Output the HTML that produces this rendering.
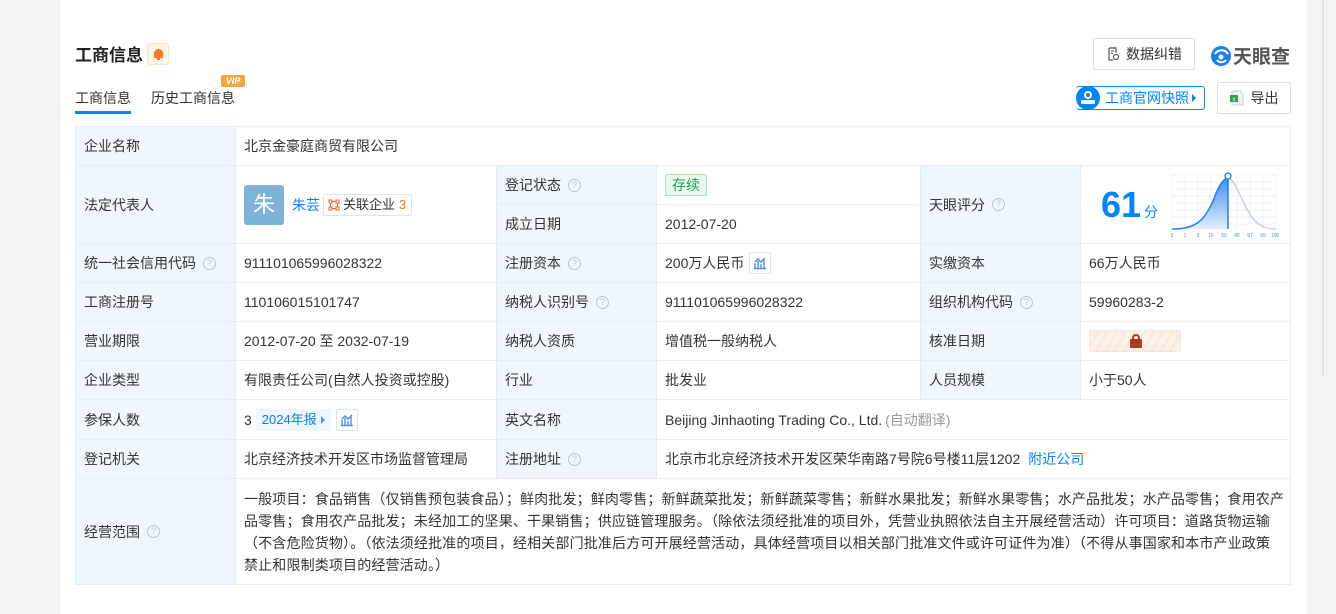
<!DOCTYPE html>
<html><head><meta charset="utf-8"><style>
*{box-sizing:border-box;margin:0;padding:0}
body{width:1336px;height:614px;background:#f4f4f4;font-family:"Liberation Sans","Noto Sans CJK SC",sans-serif;color:#333;font-size:14px;position:relative;overflow:hidden}
.card{position:absolute;left:59px;top:0;width:1248px;height:614px;background:#fff;border-left:1px solid #eaeaea}
.a{position:absolute}
.c{position:absolute;border-right:1px solid #e4ecf6;border-bottom:1px solid #e4ecf6;display:flex;align-items:center;padding-left:8px;white-space:nowrap}
.l{background:#f0f6fd}
.q{display:inline-block;width:13px;height:13px;border:1px solid #b7c6d8;border-radius:50%;font-size:9px;color:#b7c6d8;text-align:center;line-height:11px;margin-left:7px}
.btn{position:absolute;border:1px solid #dcdfe6;border-radius:2px;background:#fff;display:flex;align-items:center;justify-content:center;font-size:14px;color:#333}
.ic{display:inline-block;width:22px;height:22px;border:1px solid #dfe3ea;border-radius:2px;margin-left:5px;position:relative}
</style></head><body>
<div class="card"></div>
<div class="a" style="left:1322px;top:0;width:2px;height:376px;background:#e4e4e6"></div>

<div class="a" style="left:75px;top:41px;font-size:17px;font-weight:bold;color:#222">工商信息</div>
<div class="a" style="left:147px;top:43px;width:22px;height:22px;background:#fff3e8;border:1px solid #fde2c8;border-radius:3px"><div style="position:absolute;left:6px;top:5px;width:9px;height:9px;background:#fa7a1a;border-radius:5px 5px 1px 1px"></div><div style="position:absolute;left:9px;top:14px;width:3px;height:2px;background:#fa7a1a"></div></div>

<div class="a" style="left:75px;top:88px;font-size:14px;color:#333">工商信息</div>
<div class="a" style="left:75px;top:111px;width:56px;height:3px;background:#0084ff"></div>
<div class="a" style="left:151px;top:88px;font-size:14px;color:#333">历史工商信息</div>
<div class="a" style="left:221px;top:75px;width:24px;height:12px;background:#f5a73b;border-radius:2px;color:#fff;font-size:9px;font-weight:bold;font-style:italic;text-align:center;line-height:12px">VIP</div>

<div class="btn" style="left:1093px;top:38px;width:102px;height:32px"><svg width="14" height="14" viewBox="0 0 14 14" style="margin-right:6px"><path d="M3 1h7v5M3 1v12h4" fill="none" stroke="#555" stroke-width="1.2"/><path d="M5 4h3M5 6.5h2" stroke="#555"/><circle cx="10" cy="10" r="2.5" fill="none" stroke="#555" stroke-width="1.2"/></svg>数据纠错</div>
<div class="a" style="left:1210px;top:42px;display:flex;align-items:center"><svg width="22" height="22" viewBox="0 0 22 22"><circle cx="11" cy="11" r="10" fill="#1a7ff5"/><path d="M5 9c3-5 10-5 13 0M7 15c2 3 7 3 9 0" stroke="#fff" stroke-width="2" fill="none"/><circle cx="11" cy="12" r="2.5" fill="#fff"/></svg><span style="font-size:19px;font-weight:bold;color:#555;margin-left:1px">天眼查</span></div>

<div class="a" style="left:1076px;top:86px;width:129px;height:24px;border:1px solid #0084ff;border-radius:3px;border-left:none"></div>
<div class="a" style="left:1076px;top:86px;width:24px;height:24px;background:#0084ff;border-radius:50%"><div style="position:absolute;left:8px;top:5px;width:8px;height:8px;border:2px solid #fff;border-radius:50%"></div><div style="position:absolute;left:5px;top:14px;width:14px;height:4px;border:2px solid #fff;border-radius:1px"></div></div>
<div class="a" style="left:1105px;top:88px;color:#0084ff;font-size:14px">工商官网快照</div>
<div class="a" style="left:1192px;top:94px;border-left:4px solid #0084ff;border-top:4px solid transparent;border-bottom:4px solid transparent"></div>

<div class="btn" style="left:1217px;top:82px;width:74px;height:32px"><svg width="14" height="16" viewBox="0 0 14 16" style="margin-right:7px"><path d="M2 1h8l3 3v11H2z" fill="#f4f4f4" stroke="#ccc"/><rect x="0" y="5" width="8" height="7" fill="#20a356"/><text x="4" y="11" font-size="6" fill="#fff" text-anchor="middle" font-family="Liberation Sans">x</text></svg>导出</div>

<div class="a" style="left:75px;top:126px;width:1216px;height:459px;border-top:1px solid #e4ecf6;border-left:1px solid #e4ecf6"></div>
<div class="c l" style="left:75px;top:127px;width:161px;height:39px;border-left:1px solid #e4ecf6">企业名称</div>
<div class="c" style="left:236px;top:127px;width:1055px;height:39px">北京金豪庭商贸有限公司</div>
<div class="c l" style="left:75px;top:166px;width:161px;height:78px;border-left:1px solid #e4ecf6">法定代表人</div>
<div class="c" style="left:236px;top:166px;width:261px;height:78px">
 <div style="width:40px;height:40px;background:#7fb2d9;border-radius:3px;color:#fff;font-size:22px;text-align:center;line-height:40px">朱</div>
 <span style="color:#0084ff;margin-left:8px">朱芸</span>
 <span style="margin-left:3px;border:1px solid #e3e3e3;border-radius:2px;padding:0 5px 0 4px;height:22px;line-height:20px;font-size:13px;display:flex;align-items:center"><svg width="12" height="12" viewBox="0 0 12 12" style="margin-right:3px"><rect x="1" y="1" width="3" height="3" fill="none" stroke="#f5632a"/><rect x="8" y="1" width="3" height="3" fill="none" stroke="#f5632a"/><rect x="1" y="8" width="3" height="3" fill="none" stroke="#f5632a"/><rect x="8" y="8" width="3" height="3" fill="none" stroke="#f5632a"/><path d="M4 2.5h4M2.5 4v4M9.5 4v4M4 9.5h4" stroke="#f5632a"/></svg>关联企业<span style="color:#fa7a1a;margin-left:4px">3</span></span>
</div>
<div class="c l" style="left:497px;top:166px;width:160px;height:39px">登记状态<span class="q">?</span></div>
<div class="c" style="left:657px;top:166px;width:264px;height:39px"><span style="background:#e9f8ee;border:1px solid #a8e2bd;color:#19a05a;border-radius:2px;padding:0 6px;height:22px;line-height:20px;font-size:14px">存续</span></div>
<div class="c l" style="left:497px;top:205px;width:160px;height:39px">成立日期</div>
<div class="c" style="left:657px;top:205px;width:264px;height:39px">2012-07-20</div>
<div class="c l" style="left:921px;top:166px;width:160px;height:78px">天眼评分<span class="q">?</span></div>
<div class="c" style="left:1081px;top:166px;width:210px;height:78px">
 <span style="position:absolute;left:20px;top:18px;font-size:36px;font-weight:bold;color:#0084ff;font-family:'Liberation Sans',sans-serif">61</span>
 <span style="position:absolute;left:63px;top:36px;font-size:14px;color:#0084ff">分</span>
 <svg class="a" style="left:90px;top:5px" width="110" height="70" viewBox="0 0 110 70">
  <defs><linearGradient id="g" x1="0" y1="0" x2="0" y2="1"><stop offset="0" stop-color="#3b8ff5"/><stop offset="1" stop-color="#e3efff"/></linearGradient></defs>
  <g stroke="#edf1f6" stroke-width="1"><path d="M1 4v54M14 4v54M27 4v54M40 4v54M53 4v54M66 4v54M79 4v54M92 4v54M105 4v54M1 4h104M1 11h104M1 18h104M1 25h104M1 32h104M1 39h104M1 46h104M1 53h104"/></g>
  <path d="M1 58C25 58 33 50 42 30C48 14 52 8 57 7L57 58Z" fill="url(#g)"/>
  <path d="M57 7C65 9 70 30 80 45C88 56 96 58 105 58" fill="none" stroke="#c8d3e0" stroke-width="1.5"/>
  <path d="M1 58C25 58 33 50 42 30C48 14 52 8 57 7" fill="none" stroke="#1a7ff5" stroke-width="1.5"/>
  <path d="M57 6V58" stroke="#1a7ff5" stroke-width="1.5"/>
  <circle cx="57" cy="5" r="3" fill="#fff" stroke="#1a7ff5" stroke-width="1.3"/>
  <g font-size="5" fill="#3b8ff5" font-family="Liberation Sans" text-anchor="middle"><text x="1" y="66">0</text><text x="14" y="66">1</text><text x="27" y="66">3</text><text x="40" y="66">15</text><text x="53" y="66">50</text><text x="66" y="66">85</text><text x="79" y="66">97</text><text x="92" y="66">99</text><text x="104" y="66">100</text></g>
 </svg>
</div>
<div class="c l" style="left:75px;top:244px;width:161px;height:39px;border-left:1px solid #e4ecf6">统一社会信用代码<span class="q">?</span></div>
<div class="c" style="left:236px;top:244px;width:261px;height:39px">911101065996028322</div>
<div class="c l" style="left:497px;top:244px;width:160px;height:39px">注册资本<span class="q">?</span></div>
<div class="c" style="left:657px;top:244px;width:264px;height:39px">200万人民币<span class="ic"><svg width="20" height="20" viewBox="0 0 20 20"><path d="M5 15V10M8 15V8M11 15V11M14 15V7M4 15.5h12M5 9l3-3 3 3 4-4" stroke="#4a8df0" fill="none" stroke-width="1.4"/></svg></span></div>
<div class="c l" style="left:921px;top:244px;width:160px;height:39px">实缴资本</div>
<div class="c" style="left:1081px;top:244px;width:210px;height:39px">66万人民币</div>
<div class="c l" style="left:75px;top:283px;width:161px;height:39px;border-left:1px solid #e4ecf6">工商注册号</div>
<div class="c" style="left:236px;top:283px;width:261px;height:39px">110106015101747</div>
<div class="c l" style="left:497px;top:283px;width:160px;height:39px">纳税人识别号<span class="q">?</span></div>
<div class="c" style="left:657px;top:283px;width:264px;height:39px">911101065996028322</div>
<div class="c l" style="left:921px;top:283px;width:160px;height:39px">组织机构代码<span class="q">?</span></div>
<div class="c" style="left:1081px;top:283px;width:210px;height:39px">59960283-2</div>
<div class="c l" style="left:75px;top:322px;width:161px;height:39px;border-left:1px solid #e4ecf6">营业期限</div>
<div class="c" style="left:236px;top:322px;width:261px;height:39px">2012-07-20 至 2032-07-19</div>
<div class="c l" style="left:497px;top:322px;width:160px;height:39px">纳税人资质</div>
<div class="c" style="left:657px;top:322px;width:264px;height:39px">增值税一般纳税人</div>
<div class="c l" style="left:921px;top:322px;width:160px;height:39px">核准日期</div>
<div class="c" style="left:1081px;top:322px;width:210px;height:39px"><div style="width:92px;height:22px;background:repeating-linear-gradient(120deg,#fbf1e6 0 7px,#f2e2d2 7px 8px);border:1px solid #f5e6d6;border-radius:2px;position:relative"><div style="position:absolute;left:40px;top:8px;width:12px;height:9px;background:#a2401f;border-radius:1px"></div><div style="position:absolute;left:42px;top:3px;width:8px;height:7px;border:2px solid #a2401f;border-bottom:none;border-radius:4px 4px 0 0"></div></div></div>
<div class="c l" style="left:75px;top:361px;width:161px;height:39px;border-left:1px solid #e4ecf6">企业类型</div>
<div class="c" style="left:236px;top:361px;width:261px;height:39px">有限责任公司(自然人投资或控股)</div>
<div class="c l" style="left:497px;top:361px;width:160px;height:39px">行业</div>
<div class="c" style="left:657px;top:361px;width:264px;height:39px">批发业</div>
<div class="c l" style="left:921px;top:361px;width:160px;height:39px">人员规模</div>
<div class="c" style="left:1081px;top:361px;width:210px;height:39px">小于50人</div>
<div class="c l" style="left:75px;top:400px;width:161px;height:40px;border-left:1px solid #e4ecf6">参保人数</div>
<div class="c" style="left:236px;top:400px;width:261px;height:40px">3<span style="margin-left:4px;background:#eef5fe;color:#0084ff;font-size:13px;padding:0 6px;height:22px;line-height:22px;display:flex;align-items:center">2024年报<span style="margin-left:4px;border-left:4px solid #4a9cf5;border-top:4px solid transparent;border-bottom:4px solid transparent"></span></span><span class="ic"><svg width="20" height="20" viewBox="0 0 20 20"><path d="M5 15V10M8 15V8M11 15V11M14 15V7M4 15.5h12M5 9l3-3 3 3 4-4" stroke="#4a8df0" fill="none" stroke-width="1.4"/></svg></span></div>
<div class="c l" style="left:497px;top:400px;width:160px;height:40px">英文名称</div>
<div class="c" style="left:657px;top:400px;width:634px;height:40px">Beijing Jinhaoting Trading Co., Ltd.<span style="color:#999;margin-left:3px">(自动翻译)</span></div>
<div class="c l" style="left:75px;top:440px;width:161px;height:39px;border-left:1px solid #e4ecf6">登记机关</div>
<div class="c" style="left:236px;top:440px;width:261px;height:39px">北京经济技术开发区市场监督管理局</div>
<div class="c l" style="left:497px;top:440px;width:160px;height:39px">注册地址<span class="q">?</span></div>
<div class="c" style="left:657px;top:440px;width:634px;height:39px">北京市北京经济技术开发区荣华南路7号院6号楼11层1202<span style="color:#0084ff;margin-left:8px">附近公司</span></div>
<div class="c l" style="left:75px;top:479px;width:161px;height:106px;border-left:1px solid #e4ecf6">经营范围<span class="q">?</span></div>
<div class="c" style="left:236px;top:479px;width:1055px;height:106px;white-space:nowrap;line-height:22px;font-size:14px;letter-spacing:0.15px"><div>一般项目：食品销售（仅销售预包装食品）；鲜肉批发；鲜肉零售；新鲜蔬菜批发；新鲜蔬菜零售；新鲜水果批发；新鲜水果零售；水产品批发；水产品零售；食用农产<br>品零售；食用农产品批发；未经加工的坚果、干果销售；供应链管理服务。（除依法须经批准的项目外，凭营业执照依法自主开展经营活动）许可项目：道路货物运输<br>（不含危险货物）。（依法须经批准的项目，经相关部门批准后方可开展经营活动，具体经营项目以相关部门批准文件或许可证件为准）（不得从事国家和本市产业政策<br>禁止和限制类项目的经营活动。）</div></div>
</body></html>
